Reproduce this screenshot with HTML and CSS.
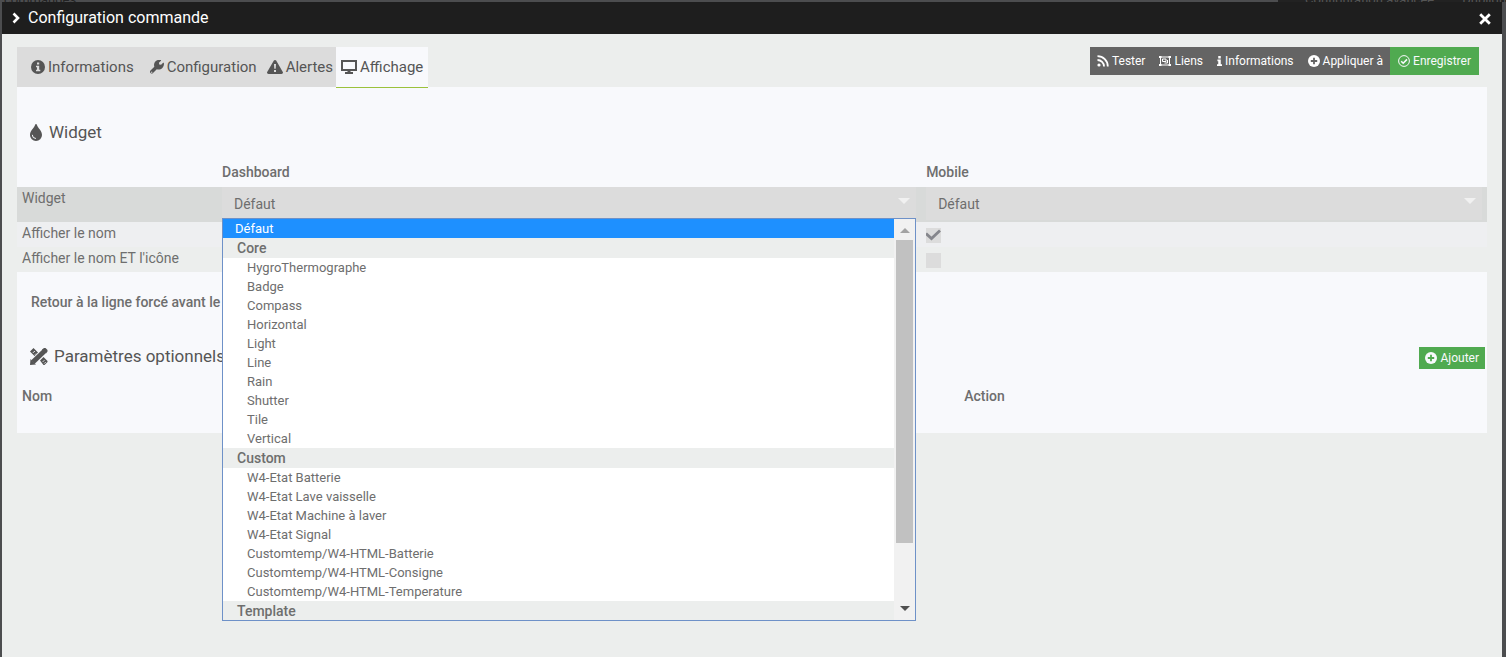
FILE: index.html
```html
<!DOCTYPE html>
<html lang="fr">
<head>
<meta charset="utf-8">
<title>Configuration commande</title>
<link rel="stylesheet" href="styles.css">
</head>
<body>
<div class="backdrop">
  <span class="backdrop-title">commandes</span>
  <div class="backdrop-tools"><span>Configuration avancée</span><span>Dupliquer</span></div>
</div>
<main class="dialog">
  <header class="titlebar">
    <svg class="chevron" viewBox="0 0 8 12"><path d="M1.5 1.500L6 6 1.500 10.500" fill="none" stroke="currentColor" stroke-width="2.600"/></svg>
    <h1 class="title">Configuration commande</h1>
    <button class="close" type="button" aria-label="Fermer"><svg viewBox="0 0 12 12"><path d="M1.200 1.200L10.800 10.800M10.800 1.200L1.200 10.800" stroke="currentColor" stroke-width="2.800"/></svg></button>
  </header>
  <div class="body">
    <div class="toolbar">
      <nav class="tabs">
        <a class="tab tab-first" href="#informations"><svg class="i14" viewBox="0 0 14 14"><circle cx="7" cy="7" r="7" fill="currentColor"/><path d="M6 2.500h2.200v2H6zM5 5.800h3.200v4H9.300v1.500H5V9.800h1V7.300H5z" fill="#dcdcdc"/></svg>Informations</a>
        <a class="tab tab-config" href="#configuration"><svg class="i14" viewBox="0 0 512 512"><path fill="currentColor" d="M507 109c-3-12-18-16-27-7l-74 74-68-11-11-68 74-74c9-9 5-24-8-27-65-16-137 1-188 52-54 54-70 132-47 201L19 388c-25 25-25 66 0 91 25 25 66 25 91 0l138-139c69 24 148 8 203-47 51-51 68-119 56-184zM64 472a24 24 0 110-48 24 24 0 010 48z"/></svg>Configuration</a>
        <a class="tab tab-alerts" href="#alertes"><svg class="i16" viewBox="0 0 16 14"><path fill="currentColor" d="M8 0c.6 0 1 .3 1.300.7l6.500 11.200c.5 1-.1 2.100-1.300 2.100h-13C.3 14-.3 12.900.2 11.900L6.700.7C7 .3 7.400 0 8 0z"/><path d="M7 4h2l-.3 4.800H7.300zM7 10h2v2H7z" fill="#dcdcdc"/></svg>Alertes</a>
        <a class="tab tab-active" href="#affichage" aria-current="page"><svg class="i16" viewBox="0 0 16 14"><path d="M1 1h14v9H1z" fill="none" stroke="currentColor" stroke-width="2"/><path fill="currentColor" d="M6.500 10h3v2H12v2H4v-2h2.500z"/></svg>Affichage</a>
      </nav>
      <div class="actions">
        <button class="btn" type="button"><svg class="i12" viewBox="0 0 12 12"><circle cx="2" cy="10" r="1.600" fill="currentColor"/><path d="M.5 5a6.500 6.500 0 016.500 6.500M.5 1.200A10.300 10.300 0 0110.800 11.500" fill="none" stroke="currentColor" stroke-width="1.800"/></svg>Tester</button>
        <button class="btn" type="button"><svg class="i12" viewBox="0 0 12 12"><path d="M1.500 2h9v8h-9z" fill="none" stroke="currentColor"/><path fill="currentColor" d="M0 1h2.500v2H0zM9.500 1H12v2H9.500zM0 9h2.500v2H0zM9.500 9H12v2H9.500z"/><path fill="none" stroke="currentColor" d="M3.500 4h3.500v2.500H3.500zM8.500 5v3H5.500"/></svg>Liens</button>
        <button class="btn" type="button"><svg class="i5" viewBox="0 0 6 12"><path fill="currentColor" d="M1.500 0h3v3h-3zM.5 4.300h4v5.700H6v2H0v-2h1.500V6.200h-1z"/></svg>Informations</button>
        <button class="btn btn-apply" type="button"><svg class="i12" viewBox="0 0 12 12"><circle cx="6" cy="6" r="6" fill="currentColor"/><path d="M6 2.800v6.400M2.800 6h6.400" stroke="#646464" stroke-width="1.800"/></svg>Appliquer à</button>
        <button class="btn btn-green" type="button"><svg class="i12" viewBox="0 0 12 12"><circle cx="6" cy="6" r="5.400" fill="none" stroke="currentColor"/><path d="M3.200 6.200l2 2 3.800-3.800" fill="none" stroke="currentColor" stroke-width="1.600"/></svg>Enregistrer</button>
      </div>
    </div>
    <section class="panel">
      <h2 class="heading"><svg class="drop" viewBox="0 0 12 17"><path fill="currentColor" d="M6 0c.4 0 .7.200.8.600C8 4.500 12 6.800 12 11a6 6 0 01-12 0C0 6.800 4 4.500 5.200.600 5.300.200 5.600 0 6 0z"/><path d="M2.300 10.800a3.700 3.700 0 003.600 3.700" fill="none" stroke="#f8f9fc"/></svg>Widget</h2>
      <table class="grid">
        <colgroup><col class="c-label"><col class="c-dash"><col></colgroup>
        <thead><tr><th></th><th>Dashboard</th><th>Mobile</th></tr></thead>
        <tbody>
          <tr class="row-widget">
            <td>Widget</td>
            <td>
              <div class="picker">
                <select class="select" aria-label="Widget dashboard"><option>Défaut</option></select>
                <svg class="caret" viewBox="0 0 12 6"><path d="M0 0h12L6 6z" fill="#f1f1f1"/></svg>
                <div class="menu">
                  <ul class="options" role="listbox" aria-label="Widget dashboard">
                    <li class="option selected" role="option" aria-selected="true">Défaut</li>
                    <li class="group">Core</li>
                    <li class="option sub" role="option">HygroThermographe</li>
                    <li class="option sub" role="option">Badge</li>
                    <li class="option sub" role="option">Compass</li>
                    <li class="option sub" role="option">Horizontal</li>
                    <li class="option sub" role="option">Light</li>
                    <li class="option sub" role="option">Line</li>
                    <li class="option sub" role="option">Rain</li>
                    <li class="option sub" role="option">Shutter</li>
                    <li class="option sub" role="option">Tile</li>
                    <li class="option sub" role="option">Vertical</li>
                    <li class="group">Custom</li>
                    <li class="option sub" role="option">W4-Etat Batterie</li>
                    <li class="option sub" role="option">W4-Etat Lave vaisselle</li>
                    <li class="option sub" role="option">W4-Etat Machine à laver</li>
                    <li class="option sub" role="option">W4-Etat Signal</li>
                    <li class="option sub" role="option">Customtemp/W4-HTML-Batterie</li>
                    <li class="option sub" role="option">Customtemp/W4-HTML-Consigne</li>
                    <li class="option sub" role="option">Customtemp/W4-HTML-Temperature</li>
                    <li class="group">Template</li>
                  </ul>
                  <div class="scroll">
                    <svg class="arrow" viewBox="0 0 10 5"><path d="M0 5h10L5 0z" fill="#a3a3a3"/></svg>
                    <div class="thumb"></div>
                    <svg class="arrow" viewBox="0 0 10 5"><path d="M0 0h10L5 5z" fill="#505050"/></svg>
                  </div>
                </div>
              </div>
            </td>
            <td>
              <div class="picker">
                <select class="select" aria-label="Widget mobile"><option>Défaut</option></select>
                <svg class="caret" viewBox="0 0 12 6"><path d="M0 0h12L6 6z" fill="#f1f1f1"/></svg>
              </div>
            </td>
          </tr>
          <tr class="row-name"><td>Afficher le nom</td><td></td><td><label class="check"><input type="checkbox" checked aria-label="Afficher le nom"><svg class="tick" viewBox="0 0 15 15"><path d="M0 5.500L5.500 10.500 14 2.500" fill="none" stroke="#85868c" stroke-width="2.800"/></svg></label></td></tr>
          <tr class="row-icon"><td>Afficher le nom ET l'icône</td><td></td><td><label class="check"><input type="checkbox" aria-label="Afficher le nom et l'icône"></label></td></tr>
        </tbody>
      </table>
      <p class="break">Retour à la ligne forcé avant le</p>
      <div class="params">
        <h2 class="heading"><svg class="tools" viewBox="0 0 18 17"><path d="M3 14L14.500 3" stroke="currentColor" stroke-width="5"/><path fill="currentColor" d="M0 17l.5-6 5.500 5.500zM12 1.500L14 0h1.500L17.500 2v1.500L16 5.500z"/><path d="M0 3.500L3.500 0 8 4.500 4.500 8zM10 12.500L13.500 9l4 4v1L14.500 17h-1z" fill="currentColor"/><path d="M3 4.800l1.800-1.800M5 6.600l1-1M12.800 13.800l1.500-1.500M14.300 15.500l1.300-1.300" stroke="#f8f9fc"/></svg>Paramètres optionnels</h2>
        <button class="btn btn-green btn-add" type="button"><svg class="i12" viewBox="0 0 12 12"><circle cx="6" cy="6" r="6" fill="currentColor"/><path d="M6 2.800v6.400M2.800 6h6.400" stroke="#50aa50" stroke-width="1.800"/></svg>Ajouter</button>
      </div>
      <table class="grid grid-params">
        <colgroup><col class="c-name"><col></colgroup>
        <thead><tr><th>Nom</th><th>Action</th></tr></thead>
      </table>
    </section>
  </div>
</main>
</body>
</html>
```
FILE: styles.css
```css
* { box-sizing: border-box; }
html { height: 100%; background: #4c4d4f; }
body {
  margin: 0;
  min-height: 100%;
  display: flex;
  flex-direction: column;
  background: #4c4d4f;
  color: #6e6e6e;
  font: 14px/17px Roboto, sans-serif;
}
h1, h2, p, ul { margin: 0; padding: 0; font-weight: 400; }
svg { flex: none; display: block; }
button { border: 0; font: inherit; }
.i14 { width: 14px; height: 14px; }
.i16 { width: 16px; height: 14px; }
.i12 { width: 12px; height: 12px; }
.i5 { width: 5px; height: 12px; }

.backdrop {
  height: 2px;
  display: flex;
  justify-content: space-between;
  overflow: hidden;
  color: #222;
  font-size: 13px;
  line-height: 0;
}
.backdrop-title { padding-left: 4px; }
.backdrop-tools {
  display: flex;
  gap: 28px;
  width: 228px;
  padding-left: 27px;
  overflow: hidden;
  white-space: nowrap;
  background: #222;
  color: #555;
}

.dialog { flex: 1 0 auto; margin: 0 4px 0 2px; background: #eceeed; }
.titlebar {
  display: flex;
  align-items: center;
  height: 32px;
  padding: 0 11px 0 10px;
  background: #1e1e1e;
  color: #fff;
}
.chevron { width: 8px; height: 12px; margin-right: 8px; }
.title { flex: 1; font-size: 16px; line-height: 20px; }
.close { padding: 2px 0 0; background: none; color: #fff; }
.close svg { width: 12px; height: 12px; }

.body { padding: 13px 15px 0; }
.toolbar { display: flex; justify-content: space-between; align-items: flex-start; height: 40px; }
.tabs { display: flex; height: 40px; background: #dcdcdc; }
.tab {
  display: flex;
  align-items: center;
  gap: 3px;
  height: 40px;
  padding: 0 5px;
  color: #555;
  font-size: 15px;
  text-decoration: none;
}
.tab-first { padding-left: 14px; }
.tab-config { padding-left: 11px; }
.tab-alerts { padding-right: 3px; }
.tab-active { height: 41px; background: #f8f9fc; border-bottom: 1px solid #9bc23c; }
.actions { display: flex; margin-right: 8px; }
.btn {
  display: flex;
  align-items: center;
  gap: 3px;
  height: 28px;
  padding: 0 7px;
  background: #646464;
  color: #fff;
  font-size: 12px;
  white-space: nowrap;
}
.btn-green { padding: 0 8px; background: #50aa50; color: #f8f9fc; }

.panel { padding: 35px 0 22px; background: #f8f9fc; }
.tab-active { z-index: 1; position: relative; }
.heading { display: flex; align-items: center; gap: 7px; padding-left: 13px; color: #555; font-size: 17px; line-height: 20px; }
.drop { width: 12px; height: 17px; }
.tools { width: 18px; height: 17px; }

.grid { width: 100%; margin-top: 15px; border-collapse: collapse; table-layout: fixed; }
.grid th { height: 30px; padding: 0 5px; text-align: left; font-weight: 500; }
.grid td { padding: 3px 5px; vertical-align: top; }
.c-label { width: 200px; }
.c-dash { width: 47.9%; }
.c-name { width: 64.1%; }
.row-widget { height: 35px; background: #d8dad9; }
.row-widget td + td { padding: 0 5px; }
.row-name { height: 25px; background: #eeeff1; }
.row-icon { height: 25px; background: #eceeed; }
.picker { position: relative; }
.select {
  display: block;
  width: 100%;
  height: 33px;
  padding: 2px 12px 0;
  appearance: none;
  border: 0;
  border-radius: 0;
  background: #dcdcdc;
  color: #6e6e6e;
  font: inherit;
}
.caret { position: absolute; right: 6px; top: 11px; width: 12px; height: 6px; }
.menu {
  position: absolute;
  z-index: 1;
  top: 31px;
  left: 0;
  right: 0;
  display: flex;
  border: 1px solid #6e91c8;
  background: #fff;
}
.options { flex: 1; list-style: none; font-size: 13px; line-height: 19px; }
.option { height: 19px; padding-left: 12px; }
.sub { padding-left: 24px; }
.selected { background: #1e90ff; color: #fff; }
.group { height: 20px; padding-left: 14px; background: #eceeed; font-size: 14px; font-weight: 500; line-height: 21px; }
.group:last-child { height: 19px; }
.scroll { display: flex; flex-direction: column; align-items: center; width: 21px; padding: 9px 0; background: #f1f1f1; }
.arrow { width: 10px; height: 5px; }
.thumb { width: 17px; height: 79%; margin: 7px 0 auto; background: #c1c1c1; }

.check { display: block; position: relative; width: 15px; height: 15px; margin-top: 3px; }
.check input { display: block; width: 15px; height: 15px; margin: 0; appearance: none; background: #dcdcdc; }
.tick { position: absolute; top: 0; left: 0; width: 15px; height: 15px; }

.break { padding: 22px 14px 0; font-weight: 500; }
.params { display: flex; align-items: flex-start; justify-content: space-between; margin-top: 35px; padding-right: 2px; }
.btn-add { height: 22px; margin-top: 1px; padding: 0 6px; }
.params + .grid { margin-top: 12px; }
.params .heading { gap: 6px; }
```
